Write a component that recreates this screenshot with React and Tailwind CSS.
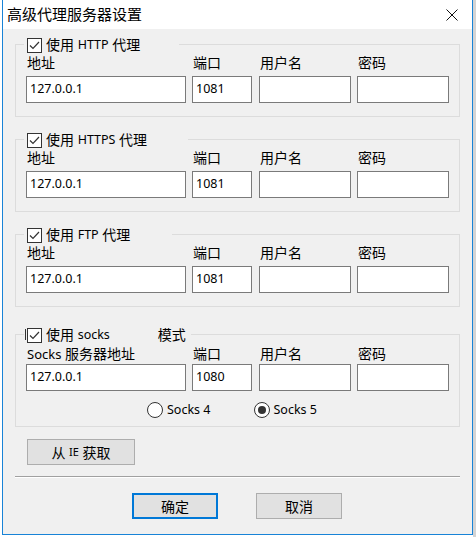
import React from "react";

const FONT = { fontFamily: '"Noto Sans", "Noto Sans CJK SC", sans-serif' };

function Check() {
  return (
    <div className="w-[15px] h-[15px] border border-[#333] bg-white flex items-center justify-center shrink-0">
      <svg width="13" height="13" viewBox="0 0 13 13">
        <polyline points="2,6.5 5,9.5 11,3" fill="none" stroke="#333" strokeWidth="1.2" />
      </svg>
    </div>
  );
}

function Lat({ children }) {
  return <span className="text-[12.5px]">{children}</span>;
}

function Field({ w, ml, label, value, gap }) {
  return (
    <div className={`flex flex-col ${w} ${ml}`}>
      <div className="h-[16px] leading-[16px] pl-[1px] text-[14px] whitespace-nowrap">{label}</div>
      <div className={`${gap} h-[27px] border border-[#7a7a7a] bg-white flex items-center pl-[3px] text-[12.5px]`}>
        {value}
      </div>
    </div>
  );
}

function Group({ legend, legendW, addr, port, pt = "pt-[10px]", gap = "mt-[5px]", mt, children, artifact }) {
  return (
    <div className={`relative w-[445px] border border-[#dcdcdc] ${mt} ${pt} pb-[13px] pl-[10px]`}>
      <div className={`absolute top-[-8px] left-[8px] ${legendW} h-[16px] bg-[#f0f0f0] flex items-center pl-[3px]`}>
        {artifact && <div className="absolute left-[1px] top-[2px] w-[1px] h-[11px] bg-[#333]" />}
        <Check />
        <div className="ml-[4px] text-[14px] leading-[16px] whitespace-nowrap flex items-center">{legend}</div>
      </div>
      <div className="flex">
        <Field w="w-[160px]" ml="" gap={gap} label={addr} value="127.0.0.1" />
        <Field w="w-[60px]" ml="ml-[6px]" gap={gap} label="端口" value={port} />
        <Field w="w-[92px]" ml="ml-[7px]" gap={gap} label="用户名" value="" />
        <Field w="w-[92px]" ml="ml-[6px]" gap={gap} label="密码" value="" />
      </div>
      {children}
    </div>
  );
}

function Radio({ on, label, ml }) {
  return (
    <div className={`flex items-center ${ml}`}>
      <div className="w-[16px] h-[16px] rounded-full border border-[#333] bg-white flex items-center justify-center">
        {on && <div className="w-[8px] h-[8px] rounded-full bg-[#333]" />}
      </div>
      <span className="ml-[4px] text-[12.5px]">{label}</span>
    </div>
  );
}

function Btn({ children, className }) {
  return (
    <div className={`h-[26px] flex items-center justify-center bg-[#e1e1e1] text-[14px] ${className}`}>
      {children}
    </div>
  );
}

export default function App() {
  return (
    <div className="w-[476px] h-[537px] flex bg-white text-black" style={FONT}>
      <div className="w-[2px] bg-white" />
      <div className="w-[471px] h-[535px] border-l border-r border-b border-[#1883d7] bg-[#f0f0f0] flex flex-col">
        <div className="h-[29px] bg-white flex items-center justify-between pl-[4px] pr-[14px]">
          <span className="text-[15px]">高级代理服务器设置</span>
          <svg width="12" height="12" viewBox="0 0 12 12">
            <path d="M0.5 0.5 L11.5 11.5 M11.5 0.5 L0.5 11.5" stroke="#111" strokeWidth="1" />
          </svg>
        </div>
        <div className="flex flex-col pl-[12px]">
          <Group
            mt="mt-[15px]"
            legendW="w-[155px]"
            legend={<>使用&nbsp;<Lat>HTTP</Lat>&nbsp;代理</>}
            addr="地址"
            port="1081"
          />
          <Group
            mt="mt-[22px]"
            legendW="w-[164px]"
            legend={<>使用&nbsp;<Lat>HTTPS</Lat>&nbsp;代理</>}
            addr="地址"
            port="1081"
          />
          <Group
            mt="mt-[22px]"
            legendW="w-[148px]"
            legend={<>使用&nbsp;<Lat>FTP</Lat>&nbsp;代理</>}
            addr="地址"
            port="1081"
          />
          <Group
            mt="mt-[27px]"
            pt="pt-[11px]"
            gap="mt-[2px]"
            legendW="w-[167px]"
            artifact
            legend={
              <>
                使用&nbsp;<Lat>socks</Lat>
                <span className="ml-[48px]">模式</span>
              </>
            }
            addr={<><span className="text-[13px]">Socks</span> 服务器地址</>}
            port="1080"
          >
            <div className="flex mt-[11px] -mb-[5px] h-[16px]">
              <Radio ml="ml-[121px]" label="Socks 4" />
              <Radio ml="ml-[43px]" on label="Socks 5" />
            </div>
          </Group>
          <Btn className="mt-[12px] ml-[12px] w-[108px] border border-[#adadad]">
            从&nbsp;<span className="text-[11px]">IE</span>&nbsp;获取
          </Btn>
          <div className="mt-[11px] w-[445px] h-[1px] bg-[#a0a0a0]" />
          <div className="w-[445px] h-[1px] bg-white" />
          <div className="flex mt-[15px]">
            <Btn className="ml-[117px] w-[86px] border-2 border-[#0078d7]">确定</Btn>
            <Btn className="ml-[38px] w-[86px] border border-[#adadad]">取消</Btn>
          </div>
        </div>
      </div>
      <div className="w-[3px] h-[537px] bg-[#d4d4d4]" />
    </div>
  );
}
